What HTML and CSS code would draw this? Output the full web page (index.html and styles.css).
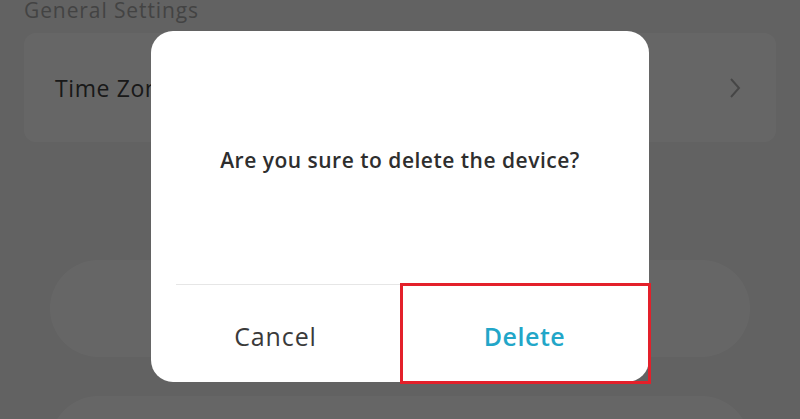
FILE: index.html
```html
<!DOCTYPE html>
<html>
<head>
<meta charset="utf-8">
<link rel="stylesheet" href="styles.css">
</head>
<body>
<div class="page">
  <div class="section-title">General Settings</div>
  <div class="card">
    <span class="card-label">Time Zone</span>
    <svg class="chevron" width="14" height="22" viewBox="0 0 14 22"><path d="M3 2 L11 11 L3 20" fill="none" stroke="#b0b0b0" stroke-width="2"/></svg>
  </div>
  <div class="pill"></div>
  <div class="pill"></div>
</div>
<div class="overlay">
  <div class="dialog">
    <div class="message">Are you sure to delete the device?</div>
    <div class="divider"></div>
    <div class="actions">
      <div class="btn cancel">Cancel</div>
      <div class="btn delete">Delete</div>
    </div>
    <div class="highlight"></div>
  </div>
</div>
</body>
</html>
```
FILE: styles.css
```css
* { box-sizing: border-box; }
html, body { margin: 0; padding: 0; width: 800px; height: 419px; overflow: hidden; }
body { font-family: "Open Sans", "Noto Sans", sans-serif; background: #f5f5f5; position: relative; }
.page { display: flex; flex-direction: column; padding: 0 24px; height: 419px; overflow: hidden; }
.page > * { flex: none; }
.section-title { font-size: 21px; color: #a8a8a8; line-height: 24px; height: 33px; letter-spacing: 0.9px; margin-top: -2px; }
.card { height: 109px; background: #ffffff; border-radius: 12px; display: flex; align-items: center; justify-content: space-between; padding: 0 34px 0 31px; margin-top: 2px; }
.card-label { font-size: 23px; color: #404040; letter-spacing: 0.6px; }
.pill { margin: 0 26px; height: 97px; border-radius: 49px; background: #ffffff; }
.card + .pill { margin-top: 118px; }
.pill + .pill { margin-top: 39px; }
.overlay { position: absolute; inset: 0; background: rgba(0,0,0,0.6); display: flex; justify-content: center; align-items: flex-start; padding-top: 31px; }
.dialog { position: relative; width: 498px; height: 351px; background: #fff; border-radius: 22px; display: flex; flex-direction: column; }
.message { flex: 1; display: flex; align-items: center; justify-content: center; font-size: 21px; font-weight: 600; color: #2e2e2e; letter-spacing: 0.5px; padding-top: 4px; }
.divider { height: 1px; background: #e6e6e6; margin: 0 25px; }
.actions { display: flex; height: 97px; }
.btn { flex: 1; display: flex; align-items: center; justify-content: center; font-size: 25px; padding-top: 4px; letter-spacing: 0.9px; }
.cancel { color: #3a3a3a; }
.delete { color: #22a6c8; font-weight: 600; letter-spacing: 0.5px; }
.highlight { position: absolute; left: 249px; top: 252px; width: 251px; height: 101px; border: 3px solid #e3202a; }
```
